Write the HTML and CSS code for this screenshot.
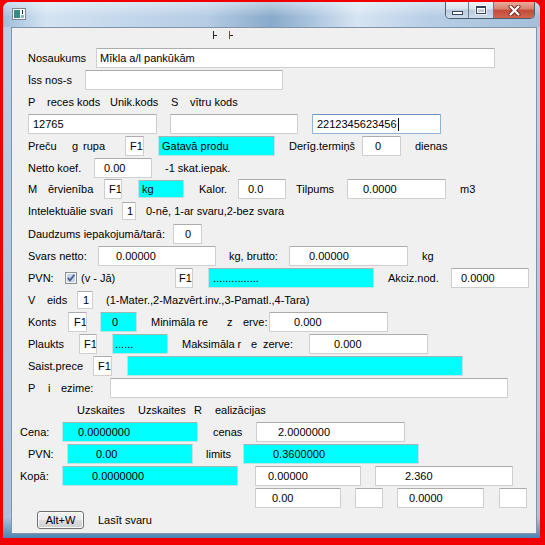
FILE: index.html
```html
<!DOCTYPE html>
<html lang="lv">
<head>
    <meta charset="UTF-8">
    <title>Prece</title>
    <link rel="stylesheet" href="styles.css">
</head>
<body>
<div class="window">
    <div class="titlebar">
        <svg class="app-icon" width="14" height="12" viewBox="0 0 14 12">
            <rect x="0.5" y="0.5" width="13" height="11" fill="#f4f6f8" stroke="#7d8791"/>
            <rect x="2" y="2" width="6" height="8" fill="#3a8b83"/>
            <rect x="8" y="2" width="4" height="3" fill="#fff"/>
            <rect x="10" y="2" width="1" height="4" fill="#2a2a2a"/>
            <rect x="9" y="7" width="3" height="3" fill="#8fb9b3"/>
        </svg>
        <div class="caption-btns">
            <span class="cap-btn min"><span class="min-glyph"></span></span>
            <span class="cap-btn max"><span class="max-glyph"></span></span>
            <span class="cap-btn close">
                <svg width="13" height="11" viewBox="0 0 13 11">
                    <path d="M2.5 1.5 L10.5 9.5 M10.5 1.5 L2.5 9.5" stroke="#6b2a22" stroke-width="4" stroke-linecap="round"/>
                    <path d="M2.5 1.5 L10.5 9.5 M10.5 1.5 L2.5 9.5" stroke="#fff" stroke-width="2.2" stroke-linecap="round"/>
                </svg>
            </span>
        </div>
    </div>
    <div class="frame">
        <div class="client">
            <div class="ticks"><span class="tick"></span><span class="tick tick-red"></span></div>

            <div class="row">
                <span class="w68">Nosaukums</span>
                <span class="fld w399">Mīkla a/l pankūkām</span>
            </div>
            <div class="row">
                <span class="w57">Īss nos-s</span>
                <span class="fld w198"></span>
            </div>
            <div class="row">
                <span class="w19">P</span><span class="w63">reces kods</span><span class="w61">Unik.kods</span><span class="w19">S</span><span>vītru kods</span>
            </div>
            <div class="row">
                <span class="fld w129 pl4">12765</span>
                <span class="fld w128 ml13"></span>
                <span class="fld focus w129 ml14 pl4">2212345623456<span class="caret"></span></span>
            </div>
            <div class="row">
                <span class="w44">Preču</span><span class="w11">g</span><span class="w42">rupa</span>
                <span class="fld w19 pl4">F1</span>
                <span class="fld cy w117 ml14">Gatavā produ</span>
                <span class="w73 ml14">Derīg.termiņš</span>
                <span class="fld w39 pl12">0</span>
                <span class="ml14">dienas</span>
            </div>
            <div class="row h21">
                <span class="w66">Netto koef.</span>
                <span class="fld w58 pl9">0.00</span>
                <span class="ml13">-1 skat.iepak.</span>
            </div>
            <div class="row h21">
                <span class="w20">M</span><span class="w56">ērvienība</span>
                <span class="fld w18 pl4">F1</span>
                <span class="fld cy sm w46 ml16">kg</span>
                <span class="w39 ml15">Kalor.</span>
                <span class="fld w48 pl9">0.0</span>
                <span class="w51 ml10">Tilpums</span>
                <span class="fld w99 pl15">0.0000</span>
                <span class="ml14">m3</span>
            </div>
            <div class="row h24">
                <span class="w94">Intelektuālie svari</span>
                <span class="fld sm w14 pl4">1</span>
                <span class="ml10">0-nē, 1-ar svaru,2-bez svara</span>
            </div>
            <div class="row">
                <span class="w145">Daudzums iepakojumā/tarā:</span>
                <span class="fld w29 pl11">0</span>
            </div>
            <div class="row">
                <span class="w70">Svars netto:</span>
                <span class="fld w118 pl17">0.00000</span>
                <span class="w60 ml13">kg, brutto:</span>
                <span class="fld w119 pl19">0.00000</span>
                <span class="ml14">kg</span>
            </div>
            <div class="row">
                <span class="w37">PVN:</span>
                <svg class="chk" width="12" height="12" viewBox="0 0 12 12">
                    <rect x="0.5" y="0.5" width="11" height="11" fill="#f1f4f8" stroke="#8e8f8f"/>
                    <rect x="2" y="2" width="8" height="8" fill="#c8d5e5"/>
                    <path d="M2.8 5.8 L5 8.3 L9.4 2.8" stroke="#465c94" stroke-width="1.8" fill="none"/>
                </svg>
                <span class="w94 ml4">(v - Jā)</span>
                <span class="fld w18 pl3">F1</span>
                <span class="fld cy w166 ml15 pl4">...............</span>
                <span class="w63 ml14">Akciz.nod.</span>
                <span class="fld w78 pl9">0.0000</span>
            </div>
            <div class="row">
                <span class="w19">V</span><span class="w30">eids</span>
                <span class="fld sm w16 pl5">1</span>
                <span class="ml13">(1-Mater.,2-Mazvērt.inv.,3-Pamatl.,4-Tara)</span>
            </div>
            <div class="row">
                <span class="w40">Konts</span>
                <span class="fld w19 pl5">F1</span>
                <span class="fld cy w37 ml13 pl11">0</span>
                <span class="w76 ml14">Minimāla re</span><span class="w16">z</span><span class="w26">erve:</span>
                <span class="fld w119 pl24">0.000</span>
            </div>
            <div class="row">
                <span class="w51">Plaukts</span>
                <span class="fld w18 pl4">F1</span>
                <span class="fld cy w56 ml15 pl2">......</span>
                <span class="w69 ml14">Maksimāla r</span><span class="w12">e</span><span class="w46">zerve:</span>
                <span class="fld w119 pl24">0.000</span>
            </div>
            <div class="row">
                <span class="w65">Saist.prece</span>
                <span class="fld w19 pl4">F1</span>
                <span class="fld cy w336 ml15"></span>
            </div>
            <div class="row">
                <span class="w20">P</span><span class="w13">i</span><span class="w49">ezime:</span>
                <span class="fld w398"></span>
            </div>
            <div class="row">
                <span class="w61 ml49">Uzskaites</span><span class="w56">Uzskaites</span><span class="w21">R</span><span>ealizācijas</span>
            </div>
            <div class="row">
                <span class="out w42">Cena:</span>
                <span class="fld cy w136 pl15">0.0000000</span>
                <span class="w43 ml15">cenas</span>
                <span class="fld w149 pl21">2.0000000</span>
            </div>
            <div class="row">
                <span class="w39">PVN:</span>
                <span class="fld cy w126 pl28">0.00</span>
                <span class="w37 ml13">limits</span>
                <span class="fld cy w176 pl29">0.3600000</span>
            </div>
            <div class="row">
                <span class="out w42">Kopā:</span>
                <span class="fld cy w176 pl29">0.0000000</span>
                <span class="fld w106 ml17 pl12">0.00000</span>
                <span class="fld w138 ml14 pl29">2.360</span>
            </div>
            <div class="row">
                <span class="fld w86 ml227 pl16">0.00</span>
                <span class="fld w28 ml14"></span>
                <span class="fld w87 ml14 pl11">0.0000</span>
                <span class="fld w28 ml15"></span>
            </div>
            <div class="row">
                <span class="btn ml9">Alt+W</span>
                <span class="ml14">Lasīt svaru</span>
            </div>
        </div>
    </div>
</div>
</body>
</html>
```

FILE: styles.css
```css
* {
    box-sizing: border-box;
}
body {
    margin: 0;
    background: #f20000;
    font-family: "Liberation Sans", Arial, sans-serif;
    font-size: 11px;
    color: #000;
}
.window {
    margin: 2px 0 0 3px;
    width: 537px;
    height: 536px;
    border-radius: 7px 7px 0 0;
    overflow: hidden;
    background: #b3cbe4;
}
.titlebar {
    display: flex;
    align-items: flex-start;
    height: 25px;
    background:
        linear-gradient(to bottom, rgba(255, 255, 255, 0.45), rgba(255, 255, 255, 0) 60%),
        linear-gradient(to right, #9fbddb 0, #d3e3f2 8%, #c4d8ec 22%, #b5cce4 38%, #88aacb 50%, #a9c3de 57%, #d6e4f2 66%, #b6cde5 80%, #a5bfdb 100%);
}
.app-icon {
    margin: 6px 0 0 9px;
}
.caption-btns {
    display: flex;
    margin-left: auto;
    margin-right: 5px;
    height: 17px;
    border: 1px solid #4d5c6e;
    border-top: none;
    border-radius: 0 0 5px 5px;
    overflow: hidden;
}
.cap-btn {
    display: flex;
    align-items: center;
    justify-content: center;
    height: 100%;
    background: linear-gradient(#eef3f8 0, #d7e2ee 45%, #b9cadc 50%, #cddbea 100%);
}
.cap-btn.min {
    width: 23px;
    border-right: 1px solid #6a7b8e;
}
.cap-btn.max {
    width: 25px;
    border-right: 1px solid #6a7b8e;
}
.cap-btn.close {
    width: 40px;
    background: linear-gradient(#e9ab9d 0, #d6806c 45%, #c4483a 50%, #d0674f 100%);
}
.min-glyph {
    width: 11px;
    height: 4px;
    margin-top: 5px;
    background: #fff;
    border: 1px solid #35465a;
}
.max-glyph {
    width: 10px;
    height: 8px;
    border: 1px solid #35465a;
    border-top-width: 2px;
    box-shadow: inset 0 0 0 1px #fff, 0 0 0 1px rgba(255, 255, 255, 0.6);
}
.frame {
    height: 511px;
    padding: 0 3px 4px 8px;
    background: linear-gradient(to bottom, #bad0e8 0, #a9c3df 96%, #4a84b0 100%);
}
.client {
    height: 507px;
    border: 1px solid #8394a8;
    background: #f0f0f0;
    padding-left: 16px;
}
.ticks {
    display: flex;
    height: 19px;
    padding: 3px 0 0 185px;
}
.tick {
    width: 4px;
    height: 8px;
    border-left: 1px solid #222;
    background: linear-gradient(#222, #222) no-repeat 0 4px / 3px 1px;
}
.tick-red {
    margin-left: 12px;
    border-left-color: #a33;
}
.row {
    display: flex;
    align-items: center;
    height: 22px;
    white-space: nowrap;
}
.row.h21 {
    height: 21px;
}
.row.h24 {
    height: 24px;
}
.row > * {
    flex: none;
}
.fld {
    height: 20px;
    line-height: 18px;
    padding-left: 3px;
    background: #fff;
    border: 1px solid #cfcfcf;
    border-top-color: #acacac;
    border-radius: 1px;
    overflow: hidden;
}
.fld.sm {
    height: 18px;
    line-height: 16px;
}
.fld.cy {
    background: #00ffff;
    border-color: #bfe3e3;
    border-top-color: #a3b5b5;
}
.fld.focus {
    border-color: #8fb4d8;
    border-top-color: #6d93ba;
}
.caret {
    display: inline-block;
    width: 1px;
    height: 13px;
    margin-left: 1px;
    vertical-align: -3px;
    background: #000;
}
.chk {
    display: block;
}
.out {
    margin-left: -8px;
}
.btn {
    display: flex;
    align-items: center;
    justify-content: center;
    width: 47px;
    height: 18px;
    border: 1px solid #707070;
    border-radius: 3px;
    background: linear-gradient(#f2f2f2 0, #ebebeb 50%, #dddddd 50%, #cfcfcf 100%);
    box-shadow: inset 0 0 0 1px #fcfcfc;
}

/* widths */
.w11 { width: 11px; }
.w12 { width: 12px; }
.w13 { width: 13px; }
.w14 { width: 14px; }
.w16 { width: 16px; }
.w18 { width: 18px; }
.w19 { width: 19px; }
.w20 { width: 20px; }
.w21 { width: 21px; }
.w26 { width: 26px; }
.w28 { width: 28px; }
.w29 { width: 29px; }
.w30 { width: 30px; }
.w37 { width: 37px; }
.w39 { width: 39px; }
.w40 { width: 40px; }
.w42 { width: 42px; }
.w43 { width: 43px; }
.w44 { width: 44px; }
.w46 { width: 46px; }
.w48 { width: 48px; }
.w49 { width: 49px; }
.w51 { width: 51px; }
.w56 { width: 56px; }
.w57 { width: 57px; }
.w58 { width: 58px; }
.w60 { width: 60px; }
.w61 { width: 61px; }
.w63 { width: 63px; }
.w65 { width: 65px; }
.w66 { width: 66px; }
.w68 { width: 68px; }
.w69 { width: 69px; }
.w70 { width: 70px; }
.w73 { width: 73px; }
.w76 { width: 76px; }
.w78 { width: 78px; }
.w86 { width: 86px; }
.w87 { width: 87px; }
.w94 { width: 94px; }
.w99 { width: 99px; }
.w106 { width: 106px; }
.w117 { width: 117px; }
.w118 { width: 118px; }
.w119 { width: 119px; }
.w126 { width: 126px; }
.w128 { width: 128px; }
.w129 { width: 129px; }
.w136 { width: 136px; }
.w138 { width: 138px; }
.w145 { width: 145px; }
.w149 { width: 149px; }
.w166 { width: 166px; }
.w176 { width: 176px; }
.w198 { width: 198px; }
.w336 { width: 336px; }
.w398 { width: 398px; }
.w399 { width: 399px; }

/* gaps */
.ml4 { margin-left: 4px; }
.ml9 { margin-left: 9px; }
.ml10 { margin-left: 10px; }
.ml13 { margin-left: 13px; }
.ml14 { margin-left: 14px; }
.ml15 { margin-left: 15px; }
.ml16 { margin-left: 16px; }
.ml17 { margin-left: 17px; }
.ml49 { margin-left: 49px; }
.ml227 { margin-left: 227px; }

/* text indent inside fields */
.pl2 { padding-left: 2px; }
.pl3 { padding-left: 3px; }
.pl4 { padding-left: 4px; }
.pl5 { padding-left: 5px; }
.pl9 { padding-left: 9px; }
.pl11 { padding-left: 11px; }
.pl12 { padding-left: 12px; }
.pl15 { padding-left: 15px; }
.pl16 { padding-left: 16px; }
.pl17 { padding-left: 17px; }
.pl19 { padding-left: 19px; }
.pl21 { padding-left: 21px; }
.pl24 { padding-left: 24px; }
.pl28 { padding-left: 28px; }
.pl29 { padding-left: 29px; }
```
